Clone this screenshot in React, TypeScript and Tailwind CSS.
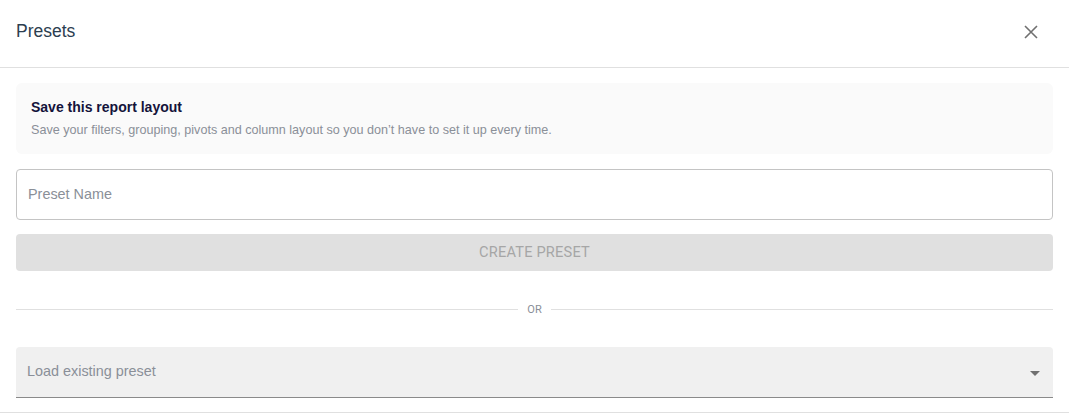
import React from 'react';

const App: React.FC = () => {
  return (
    <div className="w-[1069px] h-[420px] bg-white font-['Liberation_Sans',Arial,sans-serif] overflow-hidden">
      {/* header */}
      <div className="h-[68px] border-b border-[#e0e0e0] flex items-center justify-between pl-4 pr-[31px]">
        <h2 className="text-[17.5px] text-[#2c3e50] pb-[4px]">Presets</h2>
        <button className="w-[14px] h-[14px] mb-[4px] flex items-center justify-center">
          <svg width="14" height="14" viewBox="0 0 14 14">
            <path d="M1 1L13 13M13 1L1 13" stroke="#707070" strokeWidth="1.6" />
          </svg>
        </button>
      </div>

      <div className="px-4 pt-[15px] pb-[14px] border-b border-[#e0e0e0]">
        <div className="bg-[#fafafa] rounded-md px-[15px] pt-[16px] pb-[16px] h-[71px]">
          <p className="text-[14px] font-bold text-[#14133b] leading-[16px]">Save this report layout</p>
          <p className="text-[12.6px] text-[#8a8f98] leading-[16px] mt-[7px]">
            Save your filters, grouping, pivots and column layout so you don’t have to set it up every time.
          </p>
        </div>

        <div className="mt-[15px] h-[51px] border border-[#c4c4c4] rounded-[4px] flex items-center px-[11px]">
          <span className="text-[14.4px] text-[#8a8f98]">Preset Name</span>
        </div>

        <button className="mt-[14px] w-full h-[37px] bg-[#e0e0e0] rounded-[4px] text-[14.6px] text-[#a6a6a6] font-['Roboto',sans-serif] tracking-[0.2px]">
          CREATE PRESET
        </button>

        <div className="mt-[31px] flex items-center gap-[9px] h-[14px]">
          <div className="flex-1 h-px bg-[#e0e0e0]" />
          <span className="text-[11px] text-[#8a8f98] font-['Roboto',sans-serif] leading-none pt-px">OR</span>
          <div className="flex-1 h-px bg-[#e0e0e0]" />
        </div>

        <div className="mt-[31px] h-[51px] bg-[#f0f0f0] rounded-t-[4px] border-b border-[#8a8a8a] flex items-center justify-between pl-[11px] pr-[13px]">
          <span className="text-[14.4px] text-[#8a8f98]">Load existing preset</span>
          <svg width="10" height="5" viewBox="0 0 10 5" className="mt-[2px]">
            <path d="M0 0H10L5 5Z" fill="#707070" />
          </svg>
        </div>
      </div>
    </div>
  );
};

export default App;
